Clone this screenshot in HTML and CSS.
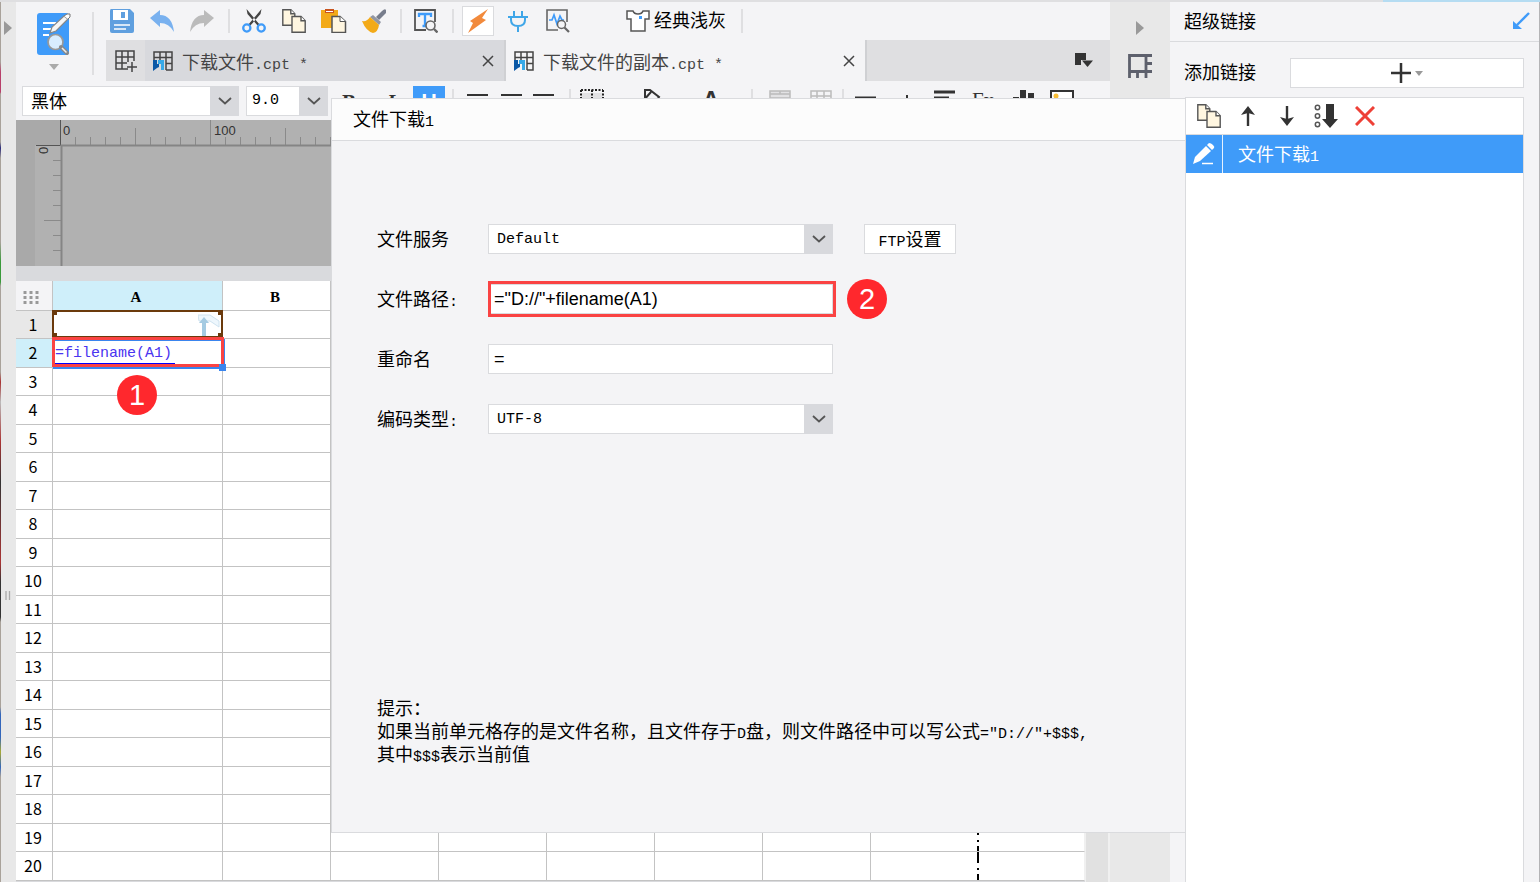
FILE: index.html
```html
<!DOCTYPE html>
<html lang="zh-CN">
<head>
<meta charset="utf-8">
<title>超级链接</title>
<link rel="stylesheet" href="styles.css">
</head>
<body>
<svg class="defs" aria-hidden="true">
  <symbol id="chev" viewBox="0 0 14 8"><path d="M1 1l6 5.500 6-5.500" fill="none" stroke="#555" stroke-width="1.800"/></symbol>
  <symbol id="close" viewBox="0 0 12 12"><path d="M1 1l10 10M11 1L1 11" stroke="#444" stroke-width="1.500"/></symbol>
  <symbol id="copy" viewBox="0 0 24 24"><g stroke="#555" stroke-width="1.400" fill="#fff6e0"><path d="M.8.8h8l4 4v11.500H.8z"/><path d="M8.800.8v4h4" fill="#fff"/><path d="M10 7.500h9l4.200 4.200v11.500H10z"/><path d="M19 7.500v4.200h4.200" fill="#fff"/></g></symbol>
  <symbol id="cpt" viewBox="0 0 20 20"><path d="M1 9V1h18v18h-6M1 6.500h18M7 1v8M13 1v18M13 12.500h6" fill="none" stroke="#444" stroke-width="1.500"/><path d="M0 9h4v4h2v3l-2 1-4 3z" fill="#0a58a6"/><path d="M5 9h6v10H8v-6H5z" fill="#36a9e8"/></symbol>
  <symbol id="caret" viewBox="0 0 10 6"><path d="M0 0h10L5 6z" fill="#aaa"/></symbol>
</svg>
<div class="strip"></div>
<div class="app">
  <div class="edge"></div>
  <aside class="left-rail">
    <svg class="tri" viewBox="0 0 8 14"><path d="M0 0l8 7-8 7z" fill="#999"/></svg>
    <svg class="grip" viewBox="0 0 6 9"><path d="M1 0v9M4.500 0v9" stroke="#aaa" stroke-width="1.300"/></svg>
  </aside>

  <main class="main">
    <header class="top">
      <div class="logo">
        <svg width="36" height="46" viewBox="0 0 36 46"><rect x="1" y="1" width="32" height="42" rx="3" fill="#3f9bf9"/><path d="M7 11h13M7 17h9M7 23h6" stroke="#fff" stroke-width="2"/><path d="M14 21l2-6L28 4l4 3-12 12z" fill="#f6f6f6" stroke="#888" stroke-width="1.200"/><path d="M28 4l3-2h3v3l-2 2" fill="#fff" stroke="#777"/><circle cx="19.500" cy="30" r="7.500" fill="#d8edff" stroke="#999" stroke-width="1.700"/><path d="M25 35l6 6" stroke="#888" stroke-width="4" stroke-linecap="round"/><path d="M26 36l4.500 4.500" stroke="#eee" stroke-width="1.500"/></svg>
        <svg width="10" height="6"><use href="#caret"/></svg>
      </div>
      <div class="bars">
        <nav class="tools">
          <button aria-label="保存"><svg width="24" height="24" viewBox="0 0 24 24"><path d="M1 0h19l4 4v18q0 2-2 2H2q-2 0-2-2V2q0-2 1-2z" fill="#5f9fdf"/><path d="M3 1h15v10H3z" fill="#fff"/><path d="M11 3h4v6h-4z" fill="#5f9fdf"/><path d="M4 16h16M4 20h12" stroke="#fff" stroke-width="1.500"/></svg></button>
          <button aria-label="撤销"><svg width="24" height="24" viewBox="0 0 24 24"><path d="M0 9l10-8v5q12 0 14 17-5-9-14-9v4z" fill="#79b1ef"/></svg></button>
          <button aria-label="重做"><svg width="24" height="24" viewBox="0 0 24 24"><path d="M24 9L14 1v5Q2 6 0 23q5-9 14-9v4z" fill="#bbb"/></svg></button>
          <i class="sep"></i>
          <button aria-label="剪切"><svg width="24" height="24" viewBox="0 0 24 24"><path d="M4.500 0l1 5L16 17l2-1zM19.500 0l-1 5L8 17l-2-1z" fill="#444"/><g fill="none" stroke="#3f9bf9" stroke-width="2.300"><circle cx="4.800" cy="19" r="3.600"/><circle cx="19.200" cy="19" r="3.600"/></g></svg></button>
          <button aria-label="复制"><svg width="24" height="24"><use href="#copy"/></svg></button>
          <button aria-label="粘贴"><svg width="26" height="24" viewBox="0 0 26 24"><path d="M0 1h17v18H0z" fill="#f3aa18"/><path d="M4 0h9v4H4z" fill="#c9541e"/><path d="M5 2.500h7" stroke="#fff"/><path d="M11 7.500h8l5.500 5v11H11z" fill="#fff6e0" stroke="#555" stroke-width="1.500"/><path d="M19 7.500v5h5.500" fill="#fff" stroke="#555"/></svg></button>
          <button aria-label="格式刷"><svg width="24" height="24" viewBox="0 0 24 24"><path d="M14 8l6-6q3-3 4-1t-1 4l-6 6z" fill="#777d8c"/><path d="M11 6l8 7-2 3-9-8z" fill="#9297a4"/><path d="M8 8l9 8q-1 7-6 8-7-2-11-12 5 1 8-4z" fill="#f3aa18"/></svg></button>
          <i class="sep"></i>
          <button aria-label="查找"><svg width="24" height="24" viewBox="0 0 24 24"><path d="M12 21H1V1h20v12" fill="none" stroke="#555" stroke-width="1.800"/><path d="M5 8V5h12v3M11 5v12M8.500 17h5" fill="none" stroke="#3f9bf9" stroke-width="2.300"/><circle cx="16.500" cy="16.500" r="4.500" fill="#f4f4f6" stroke="#666" stroke-width="1.600"/><path d="M20 20l3.500 3.500" stroke="#666" stroke-width="2.400"/></svg></button>
          <i class="sep"></i>
          <button class="boxed" aria-label="闪电"><svg width="24" height="24" viewBox="0 0 24 24"><path d="M22 0L4 12l3 2-5 10 18-13-4-2z" fill="#f28a3c"/></svg></button>
          <button aria-label="连接"><svg width="20" height="22" viewBox="0 0 20 22"><path d="M6 1v5M14 1v5M0 7h20M3 7v3q0 6 7 6t7-6V7M10 16v6" fill="none" stroke="#3fa6e8" stroke-width="2"/></svg></button>
          <button aria-label="监控"><svg width="24" height="24" viewBox="0 0 24 24"><path d="M12 21H1V1h20v12" fill="none" stroke="#666" stroke-width="1.600"/><path d="M3 11h3l2-5 3 9 3-8 2 4h2" fill="none" stroke="#3f9bf9" stroke-width="1.700"/><circle cx="15.500" cy="15.500" r="4" fill="#f4f4f6" stroke="#666" stroke-width="1.500"/><path d="M18.500 18.500L23 23" stroke="#666" stroke-width="2.200"/></svg></button>
          <button class="theme"><svg width="24" height="22" viewBox="0 0 24 22"><path d="M1 1h6q1 3 5 3t5-3h6v8h-4v12H5V9H1z" fill="#fff" stroke="#555" stroke-width="1.500"/><path d="M13 6h3v3h-3z" fill="#3f9bf9"/></svg><span>经典浅灰</span></button>
          <i class="sep last"></i>
        </nav>
        <nav class="tabs">
          <button class="new-tab" aria-label="新建"><svg width="22" height="22" viewBox="0 0 22 22"><path d="M13 19H1V1h18v10M1 7h18M1 13h11M7 1v18M13 1v11M17 12v10M12 17h10" fill="none" stroke="#444" stroke-width="1.500"/></svg></button>
          <div class="tab"><svg width="20" height="20"><use href="#cpt"/></svg><span>下载文件<span class="m">.cpt *</span></span><button aria-label="关闭"><svg width="12" height="12"><use href="#close"/></svg></button></div>
          <div class="tab active"><svg width="20" height="20"><use href="#cpt"/></svg><span>下载文件的副本<span class="m">.cpt *</span></span><button aria-label="关闭"><svg width="12" height="12"><use href="#close"/></svg></button></div>
          <button class="tab-list" aria-label="标签列表"><svg width="18" height="15" viewBox="0 0 18 15"><path d="M0 0h11v7H6v5H0z" fill="#333"/><path d="M7 7.500h11L12.500 14z" fill="#333"/></svg></button>
        </nav>
      </div>
    </header>

    <div class="format">
      <label class="combo font"><select aria-label="字体"><option>黑体</option></select><span class="arrow"><svg width="14" height="8"><use href="#chev"/></svg></span></label>
      <label class="combo size"><select aria-label="字号"><option>9.0</option></select><span class="arrow"><svg width="14" height="8"><use href="#chev"/></svg></span></label>
      <div class="icons">
        <button class="b">B</button>
        <button class="b it">I</button>
        <button class="b on">U</button>
        <i class="sep"></i>
        <button aria-label="左对齐"><svg width="22" height="24"><path d="M0 6h21M0 10h14M0 14h21" stroke="#333" stroke-width="2"/></svg></button>
        <button aria-label="居中"><svg width="22" height="24"><path d="M0 6h21M4 10h13M0 14h21" stroke="#333" stroke-width="2"/></svg></button>
        <button aria-label="右对齐"><svg width="22" height="24"><path d="M0 6h21M7 10h14M0 14h21" stroke="#333" stroke-width="2"/></svg></button>
        <i class="sep"></i>
        <button aria-label="边框"><svg width="24" height="24"><path d="M1 4h22v19H1z" fill="#e2e2e4"/><path d="M1 1h22M1 1v22M12 1v22M23 1v22" stroke="#222" stroke-width="2" stroke-dasharray="2 1.500"/></svg></button>
        <span></span>
        <button aria-label="填充"><svg width="20" height="24" viewBox="0 0 20 24"><path d="M4 9V1h5l9 7-8 11-8-7 8-9" fill="none" stroke="#333" stroke-width="2"/></svg></button>
        <span></span>
        <button class="b big">A</button>
        <i class="sep"></i>
        <button aria-label="合并"><svg width="22" height="24"><path d="M1 2h20v20H1zM1 5h20M1 9h20M11 2v3" fill="#e2e2e4" stroke="#bbb" stroke-width="1.500"/></svg></button>
        <button class="end" aria-label="拆分"><svg width="22" height="24"><path d="M1 2h20v20H1zM1 7h20M7 2v20M14 2v20" fill="#f4f4f6" stroke="#bbb" stroke-width="1.500"/></svg></button>
        <i class="sep"></i>
        <button aria-label="文本"><svg width="22" height="24"><path d="M0 9h21" stroke="#333" stroke-width="3"/></svg></button>
        <button aria-label="插入"><svg width="22" height="24"><path d="M11 6v14" stroke="#333" stroke-width="2"/></svg></button>
        <button aria-label="段落"><svg width="22" height="24"><path d="M0 3h21M0 9h15" stroke="#333" stroke-width="3"/></svg></button>
        <button class="fx">Fx</button>
        <button aria-label="图表"><svg width="22" height="24"><path d="M7 1h6v22H7zM15 4h6v19h-6zM0 8h6v15H0z" fill="#333"/></svg></button>
        <button aria-label="图片"><svg width="24" height="24"><path d="M1 2h22v20H1z" fill="#fff" stroke="#333" stroke-width="2"/><circle cx="6" cy="7" r="2.500" fill="#f8bd35"/></svg></button>
      </div>
    </div>

    <svg class="ruler" aria-hidden="true">
      <defs>
        <pattern id="hx" x="44" y="0" width="150" height="27" patternUnits="userSpaceOnUse"><path d="M.5 0v25M15.500 17v8M30.500 17v8M45.500 17v8M60.500 17v8M75.500 8v17M90.500 17v8M105.500 17v8M120.500 17v8M135.500 17v8" stroke="#8a8a8a"/></pattern>
        <pattern id="vx" x="0" y="25" width="46" height="150" patternUnits="userSpaceOnUse"><path d="M37 15.500h8M37 30.500h8M37 45.500h8M37 60.500h8M28 75.500h17M37 90.500h8M37 105.500h8" stroke="#8a8a8a"/></pattern>
      </defs>
      <rect width="19" height="146" fill="#a9a9a9"/><rect width="44" height="25" fill="#a9a9a9"/>
      <rect x="44" width="100%" height="27" fill="url(#hx)"/>
      <rect y="25" width="46" height="121" fill="url(#vx)"/>
      <path d="M44.500 0v25.500H20" fill="none" stroke="#555"/>
      <path d="M4000 25.500H45.500V146" fill="none" stroke="#858585" stroke-width="2"/>
      <text x="47" y="15">0</text><text x="198" y="15">100</text>
      <text transform="translate(32 34) rotate(-90)">0</text>
    </svg>

    <div class="sheet">
      <div class="grid-wrap">
        <table class="grid">
          <colgroup><col class="c-head"><col class="c-a"><col class="c-n"><col class="c-n"><col class="c-n"><col class="c-n"><col class="c-n"><col class="c-n"><col class="c-n"><col></colgroup>
          <thead><tr><th class="corner"><svg width="16" height="14"><path d="M2 0v14M8 0v14M14 0v14" stroke="#999" stroke-width="3" stroke-dasharray="3 2"/></svg></th><th class="sel">A</th><th>B</th><th>C</th><th>D</th><th>E</th><th>F</th><th>G</th><th>H</th><th>I</th></tr></thead>
          <tbody id="rows"></tbody>
        </table>
      </div>
      <div class="scroll"></div>
    </div>
  </main>

  <aside class="right-rail">
    <svg width="8" height="14" viewBox="0 0 8 14"><path d="M0 0l8 7-8 7z" fill="#999"/></svg>
    <svg width="25" height="25" viewBox="0 0 25 25"><path d="M1.500 24V1.500H24M18 1.500V24M1.500 17.500H24M18 9.500h6M9.500 18v6" fill="none" stroke="#5d606c" stroke-width="2.800"/></svg>
  </aside>

  <aside class="panel">
    <h2>超级链接<svg width="18" height="18" viewBox="0 0 18 18"><path d="M17 2L5 14" stroke="#3f9bf9" stroke-width="2.400"/><path d="M1 10v8h9z" fill="#3f9bf9"/></svg></h2>
    <div class="add"><span>添加链接</span><button aria-label="添加"><svg width="20" height="20"><path d="M10 0v20M0 10h20" stroke="#333" stroke-width="2.500"/></svg><svg width="8" height="5"><path d="M0 0h8L4 5z" fill="#999"/></svg></button></div>
    <div class="list">
      <div class="list-tools">
        <button aria-label="复制"><svg width="24" height="24"><use href="#copy"/></svg></button>
        <button aria-label="上移"><svg width="16" height="20"><path d="M8 3v17" stroke="#333" stroke-width="2.400"/><path d="M8 0l7 9-7-2-7 2z" fill="#333"/></svg></button>
        <button aria-label="下移"><svg width="16" height="20"><path d="M8 0v17" stroke="#333" stroke-width="2.400"/><path d="M8 20l7-9-7 2-7-2z" fill="#333"/></svg></button>
        <button aria-label="排序"><svg width="24" height="24"><g fill="none" stroke="#555" stroke-width="1.500"><circle cx="3.500" cy="3.500" r="2.200"/><circle cx="3.500" cy="12" r="2.200"/><circle cx="3.500" cy="20.500" r="2.200"/></g><path d="M12 0h8v15h4l-8 9-8-9h4z" fill="#333"/></svg></button>
        <button aria-label="删除"><svg width="20" height="20"><path d="M1 1l18 18M19 1L1 19" stroke="#ee4037" stroke-width="3"/></svg></button>
      </div>
      <div class="item"><button aria-label="编辑"><svg width="22" height="22" viewBox="0 0 22 22"><path d="M0 21l2-7L13 3l5 5L7 18z" fill="#fff"/><path d="M14 2l2-2q2 0 4 2t1 3l-2 2z" fill="#fff"/><path d="M9 20.500h11" stroke="#fff" stroke-width="1.500"/></svg></button><span>文件下载<span class="m">1</span></span></div>
    </div>
  </aside>
</div>

<section class="dialog">
  <h1><span>文件下载<span class="m">1</span></span></h1>
  <form class="form">
    <label for="svc">文件服务</label>
    <div class="combo"><select id="svc"><option>Default</option></select><span class="arrow"><svg width="14" height="8"><use href="#chev"/></svg></span></div>
    <button type="button" class="ftp"><span><span class="m">FTP</span>设置</span></button>
    <label for="path">文件路径<span class="m">:</span></label>
    <div class="marked"><input id="path" value='="D://"+filename(A1)'><b class="badge">2</b></div>
    <label for="ren">重命名</label>
    <input id="ren" value="=">
    <label for="enc">编码类型<span class="m">:</span></label>
    <div class="combo"><select id="enc"><option>UTF-8</option></select><span class="arrow"><svg width="14" height="8"><use href="#chev"/></svg></span></div>
  </form>
  <p class="hint">提示：<br>如果当前单元格存的是文件名称，且文件存于<span class="m">D</span>盘，则文件路径中可以写公式<span class="m">="D://"+$$$,</span><br>其中<span class="m">$$$</span>表示当前值</p>
</section>
<script src="script.js"></script>
</body>
</html>
```
FILE: styles.css
```css
* { box-sizing: border-box; }
body {
  margin: 0;
  height: 100vh;
  display: flex;
  flex-direction: column;
  position: relative;
  overflow: hidden;
  background: #f4f4f6;
  color: #000;
  font: 18px/24px "Noto Sans CJK SC", sans-serif;
}
svg { display: block; flex: none; }
button, input, select { font: inherit; color: inherit; }
button { background: none; border: 0; padding: 0; display: flex; align-items: center; justify-content: center; }
.defs { position: absolute; width: 0; height: 0; }
.m { font-family: "Liberation Mono", monospace; font-size: 15px; line-height: 0; }
.strip { height: 2px; background: linear-gradient(to left, #b5dcf2 157px, #dfdfe1 157px); }
.app { flex: 1; display: flex; min-height: 0; border-right: 1px solid #b4b4b6; }
.edge { width: 1px; background: linear-gradient(#a9a29a 60px, #b8406a 70px, #b8406a 90px, #a9a29a 92px, #a9a29a 140px, #2a2a7a 146px, #a9a29a 156px, #a9a29a 240px, #3a9a3a 260px, #3a9a3a 280px, #a9a29a 284px, #a9a29a 370px, #a33 380px, #bbb 400px, #a33 440px, #333 480px, #a33 560px, #333 580px, #333 615px, #a9a29a 620px, #a9a29a 705px, #36b 712px, #36b 735px, #aa3 750px, #36b 765px, #a9a29a 775px); }
.left-rail {
  width: 15px;
  background: #e8e8e8;
  display: flex;
  flex-direction: column;
  align-items: center;
  justify-content: space-between;
  padding: 19px 2px 282px 0;
}
.tri { width: 8px; height: 14px; }
.grip { width: 6px; height: 9px; }
.main { flex: 1; min-width: 0; display: flex; flex-direction: column; }

.top { display: flex; }
.logo {
  width: 78px;
  margin: 10px 12px 6px 0;
  border-right: 2px solid #dfdfe1;
  display: flex;
  flex-direction: column;
  align-items: center;
  gap: 6px;
}
.bars { flex: 1; min-width: 0; }
.tools { display: flex; align-items: center; gap: 8px; height: 38px; }
.tools button { width: 32px; height: 30px; }
.tools .boxed { background: #fff; border: 1px solid #dadbde; }
.tools .theme { width: auto; margin-left: 44px; gap: 4px; }
.theme span { padding-bottom: 4px; }
.sep { flex: none; width: 2px; height: 24px; background: #dfdfe1; }
.tools .sep { margin-left: 2px; }
.tools .last { margin-left: 7px; }
.tabs { display: flex; height: 41px; background: #dfdfe1; color: #444; }
.new-tab { width: 39px; }
.tab {
  width: 361px;
  padding: 0 10px 0 8px;
  display: flex;
  align-items: center;
  gap: 9px;
  background: #d8d9dd;
  border-right: 2px solid #cfd0d3;
}
.tab.active { background: #f4f4f6; }
.tab button { margin-left: auto; }
.tab-list { margin: 0 17px 0 auto; }

.format { display: flex; align-items: center; height: 39px; padding-left: 6px; }
.combo { display: grid; height: 30px; }
.combo select {
  grid-area: 1 / 1;
  width: 100%;
  appearance: none;
  background: #fff;
  border: 1px solid #dadbde;
  border-radius: 0;
  padding: 0 30px 0 8px;
  font: 15px "Liberation Mono", monospace;
}
.combo .arrow {
  grid-area: 1 / 1;
  justify-self: end;
  width: 29px;
  background: #d8d9dd;
  display: flex;
  align-items: center;
  justify-content: center;
  pointer-events: none;
}
.font { width: 217px; margin-right: 7px; }
.font select { font: 18px "Noto Sans CJK SC", sans-serif; padding-bottom: 2px; }
.size { width: 82px; }
.size select { padding-left: 5px; }
.icons {
  display: grid;
  grid-template-columns: 42px 42px 34px 14px 36px 31px 34px 18px 26px 24px 44px 14px 48px 34px 22px 41px 22px 24px 58px 18px 58px 24px 52px;
  height: 30px;
  align-items: center;
  justify-items: center;
}
.icons button { height: 30px; }
.b { font: bold 21px "Liberation Serif", serif; color: #333; }
.icons .b { padding-top: 3px; }
.icons .it { font-style: italic; }
.icons .on { width: 32px; background: #3f9bf9; color: #fff; font-family: "Liberation Sans", sans-serif; padding-top: 0; }
.icons .big { font: bold 24px "Liberation Sans", sans-serif; padding-bottom: 2px; padding-top: 0; }
.icons .end { justify-self: end; }
.fx { font: 21px "Liberation Serif", serif; color: #333; }

.ruler { width: 100%; height: 146px; background: #b1b1b1; }
.ruler text { font: 13px "Liberation Sans", sans-serif; fill: #333; }

.sheet { flex: 1; min-height: 0; display: flex; background: #d9dadd; overflow: hidden; }
.grid-wrap { flex: 1; padding-top: 15px; }
.grid { width: 100%; table-layout: fixed; border-collapse: separate; border-spacing: 0; background: #fff; }
.c-head { width: 37px; }
.c-a { width: 170px; }
.c-n { width: 108px; }
.grid th, .grid td { padding: 0; border: solid #c3c3c3; border-width: 0 1px 1px 0; }
.grid th { font-weight: 400; font-size: 16px; line-height: 20px; padding: 0 2px 2px 0; }
.grid thead th { height: 30px; padding: 4px 3px 0 0; font: bold 15px "Liberation Serif", serif; }
.grid thead .corner { background: #f4f4f6; padding-right: 6px; }
.corner svg { margin: auto; }
.grid tr { height: 28px; }
.grid tbody tr:nth-child(even) { height: 29px; }
.grid .sel { background: #cfeffa; }
.grid .used { background: #e8e8e8; }
.grid tr > :last-child { border-right-color: #f0f0f0; }
.grid .page-end {
  border-right: 0;
  background: repeating-linear-gradient(#000 0 11px, #fff 11px 16px, #000 16px 18px, #fff 18px 22px) right / 2px 100% no-repeat;
}
.a1, .a2 { position: relative; }
.a1 svg { margin: 0 2px 0 auto; }
.a1::after {
  content: "";
  position: absolute;
  inset: -1px -1px 0;
  border: 2px solid #6b3a0c;
  background:
    linear-gradient(#6b3a0c, #6b3a0c) left top / 3px 3px no-repeat,
    linear-gradient(#6b3a0c, #6b3a0c) right top / 3px 3px no-repeat,
    linear-gradient(#6b3a0c, #6b3a0c) left bottom / 3px 3px no-repeat,
    linear-gradient(#6b3a0c, #6b3a0c) right bottom / 3px 3px no-repeat;
}
.a2 { color: #4a35f0; }
.formula { display: flex; margin-left: 2px; padding: 5px 0 2px; font: 15px/18px "Liberation Mono", monospace; }
.formula u { text-decoration: none; border-bottom: 1px solid #00f; padding-right: 3px; }
.a2::before { content: ""; position: absolute; inset: 0 -3px -2px 0; border: 2px solid #3a85ee; }
.a2::after { content: ""; position: absolute; inset: -2px -2px 0 -1px; border: 3px solid #fa4343; z-index: 1; }
.handle { position: absolute; right: -4px; bottom: -4px; width: 7px; height: 7px; background: #3a85ee; z-index: 2; }
.badge {
  position: absolute;
  width: 40px;
  height: 40px;
  border-radius: 50%;
  background: #ff282d;
  color: #fff;
  font: 29px/40px "Liberation Sans", sans-serif;
  text-align: center;
  z-index: 2;
}
.a2 .badge { left: 64px; top: 36px; }
.scroll { width: 25px; background: #e1e1e1; border: solid #f0f0f0; border-width: 0 2px 0 1px; }

.right-rail { width: 60px; background: #e8e8e8; display: flex; flex-direction: column; align-items: center; gap: 19px; padding-top: 19px; }
.panel { width: 369px; display: flex; flex-direction: column; }
h1, h2 { margin: 0; font-size: 18px; font-weight: 400; display: flex; align-items: center; }
h2 { height: 40px; padding: 0 9px 3px 14px; border-bottom: 1px solid #dadbde; justify-content: space-between; }
.add { display: flex; align-items: center; justify-content: space-between; padding: 16px 15px 9px 14px; }
.add span { padding-bottom: 4px; }
.add button { width: 234px; height: 30px; background: #fff; border: 1px solid #dadbde; gap: 4px; }
.list { flex: 1; margin: 0 15px; background: #fff; border: 1px solid #dadbde; border-bottom: 0; }
.list-tools { display: flex; height: 37px; padding-left: 7px; gap: 7px; border-bottom: 1px solid #dadbde; }
.list-tools button { width: 32px; }
.item { display: flex; align-items: center; height: 38px; background: #3f9bf9; color: #fff; gap: 15px; }
.item button { width: 37px; height: 38px; border-right: 1px solid #e6f2ff; }
.item > span { padding-bottom: 2px; }

.dialog {
  position: absolute;
  top: 98px;
  bottom: 49px;
  left: 331px;
  right: 354px;
  display: flex;
  flex-direction: column;
  background: #f4f4f6;
  border: 1px solid #dadbde;
  z-index: 5;
}
h1 { height: 42px; padding: 0 21px 3px; background: #fcfcfc; border-bottom: 1px solid #dadbde; }
.form {
  display: grid;
  grid-template-columns: 111px 345px 123px;
  row-gap: 30px;
  grid-auto-rows: 30px;
  padding: 83px 45px 0;
  align-items: center;
}
.form label { grid-column: 1; padding-bottom: 2px; }
.form input { width: 100%; height: 30px; padding: 0 5px; background: #fff; border: 1px solid #dadbde; font: 18px "Liberation Sans", sans-serif; outline: 0; }
.ftp { height: 30px; width: 92px; margin-left: 31px; padding-bottom: 2px; background: #fff; border: 1px solid #dadbde; }
.marked { position: relative; }
.marked input { display: block; }
.marked::after { content: ""; position: absolute; inset: -3px -3px -3px 0; border: 3px solid #fa4343; }
.marked .badge { right: -54px; top: -5px; }
.hint { margin: auto 45px 67px; line-height: 23px; }
```
FILE: script.js
```js
const body = document.getElementById('rows');
const a1 = '<td class="a1"><svg width="22" height="22" viewBox="0 0 22 22"><path d="M0 1h12l9 6v6L12 7H1z" fill="#eef7fd" stroke="#cfe3f0"/><path d="M4 22V9H1l5-6 5 6H8v13z" fill="#a5cbe2"/></svg></td>';
const a2 = '<td class="a2"><div class="formula"><u>=filename(A1)</u></div><i class="handle"></i><b class="badge">1</b></td>';
for (let r = 1; r <= 20; r++) {
  const row = document.createElement('tr');
  const head = r === 1 ? 'used' : r === 2 ? 'sel' : '';
  let html = `<th class="${head}">${r}</th>`;
  html += r === 1 ? a1 : r === 2 ? a2 : '<td></td>';
  html += '<td></td>'.repeat(6) + '<td class="page-end"></td><td></td>';
  row.innerHTML = html;
  body.append(row);
}
```
